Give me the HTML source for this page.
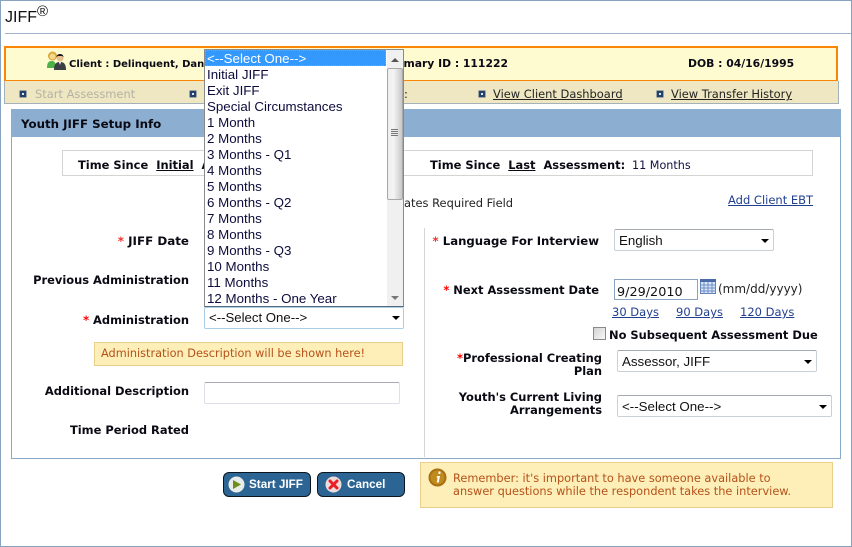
<!DOCTYPE html>
<html><head><meta charset="utf-8">
<style>
html,body{margin:0;padding:0;background:#fff}
#p{position:relative;width:852px;height:547px;overflow:hidden;background:#fff;font-family:"DejaVu Sans",sans-serif;font-size:11.45px;color:#000}
#p div,#p a,#p span.a,#p svg{position:absolute}
.t{white-space:nowrap;line-height:14px}
.b{font-weight:bold;font-size:11.45px;color:#0a0a14}
.r{text-align:right}
.red{color:#f03030}
.lnk{color:#1f3f8f;text-decoration:underline;white-space:nowrap;line-height:14px;font-size:11.5px}
.nav{color:#222;text-decoration:underline;white-space:nowrap;line-height:14px;font-size:11.45px}
.sq{width:6px;height:6px;background:#24406e;border:0;box-shadow:0 0 0 0.5px #4a6080}
.sq:after{content:"";position:absolute;left:2px;top:2px;width:2px;height:2px;background:#dfe6ee}
.sel{background:#fff;border:1px solid #c9d0d8;border-top-color:#a5a9b0;border-radius:2px;box-sizing:border-box;font-family:"Liberation Sans",sans-serif;font-size:13.33px;line-height:18px;color:#111;white-space:nowrap}
.arr{width:0;height:0;border-left:4px solid transparent;border-right:4px solid transparent;border-top:4px solid #000}
.it{left:3px;height:16px;line-height:18px;font-family:"Liberation Sans",sans-serif;font-size:13.33px;color:#0c0c3c;white-space:nowrap}
.btn{background:#2c6593;border:1px solid #0b1620;border-radius:6px;box-sizing:border-box;height:25px;top:472px;color:#fff;font-family:"Liberation Sans",sans-serif;font-weight:bold;font-size:11.7px;line-height:23px;white-space:nowrap}
.note{background:#feeeb8;border:1px solid #e8cf8c;box-sizing:border-box;color:#b5521a}
</style></head><body>
<div id="p">
<div style="left:0;top:0;width:850px;height:545px;border:1px solid #88a3bf"></div>
<div class="t" style="left:5px;top:8px;font-family:'Liberation Sans',sans-serif;font-size:16px;line-height:20px;color:#111">JIFF<span style="position:relative;top:-6px;font-size:15px">®</span></div>
<div style="left:5px;top:33px;width:846px;height:1px;background:#9fb4c8"></div>

<div style="left:4px;top:46px;width:830px;height:32px;background:#fffbd1;border:2px solid #fb8505"></div>
<svg style="left:46px;top:50px" width="22" height="22" viewBox="0 0 22 22">
<circle cx="6.500" cy="6" r="4.500" fill="#d8a83a"/><circle cx="6.500" cy="6.500" r="3" fill="#f4d88a"/>
<path d="M1 18 C1 12 3 11 6 11 C8 11 10 12 10 18Z" fill="#4fb04a"/>
<circle cx="14" cy="8" r="3.500" fill="#e8c090"/><path d="M10.500 7 C10.500 3 17.500 3 17.500 7 L16 6 L12 6Z" fill="#1a1a1a"/>
<path d="M8 20 C8 13 11 12 14 12 C17 12 20 13 20 20Z" fill="#3c4044"/><path d="M13 12 L14 15 L15 12Z" fill="#fff"/>
</svg>
<div class="t b" style="left:69px;top:58px;font-size:10px">Client : Delinquent, Dan</div>
<div class="t b r" style="right:344px;top:57px;font-size:10.8px">Primary ID : 111222</div>
<div class="t b" style="left:688px;top:57px;font-size:10.8px">DOB : 04/16/1995</div>

<div style="left:4px;top:81px;width:833px;height:22px;background:#efe7c1;border:1px solid #a3b2ba;border-top:0"></div>
<div class="sq" style="left:20px;top:91px"></div>
<div class="t" style="left:35px;top:87px;color:#b4b2a4">Start Assessment</div>
<div class="sq" style="left:190px;top:91px"></div>
<div class="t nav" style="left:404px;top:87px;text-decoration:none">:</div>
<div class="sq" style="left:479px;top:91px"></div>
<a class="nav" style="left:493px;top:87px">View Client Dashboard</a>
<div class="sq" style="left:657px;top:91px"></div>
<a class="nav" style="left:671px;top:87px">View Transfer History</a>

<div style="left:11px;top:109px;width:828px;height:349px;border:1px solid #8aa9c6;border-top:0"></div>
<div style="left:11px;top:109px;width:830px;height:28px;background:#8cafd1"></div>
<div class="t b" style="left:21px;top:117px;font-size:11.8px">Youth JIFF Setup Info</div>

<div style="left:62px;top:150px;width:749px;height:24px;border:1px solid #d4d4d4"></div>
<div class="t b" style="left:78px;top:158px">Time Since&nbsp; <u>Initial</u>&nbsp; A</div>
<div class="t b" style="left:430px;top:158px">Time Since&nbsp; <u>Last</u>&nbsp; Assessment:</div>
<div class="t" style="left:632px;top:159px;color:#101040;font-size:11.2px">11 Months</div>

<div class="t" style="left:404px;top:196px;color:#222">ates Required Field</div>
<a class="lnk" style="left:728px;top:193px">Add Client EBT</a>

<div class="t b r" style="right:663px;top:234px;font-size:11.9px"><span class="red">*</span> JIFF Date</div>
<div class="t b r" style="right:663px;top:273px">Previous Administration</div>
<div class="t b r" style="right:663px;top:313px"><span style="color:#f00">*</span> Administration</div>
<div class="t b r" style="right:663px;top:384px">Additional Description</div>
<div class="t b r" style="right:663px;top:423px">Time Period Rated</div>

<div class="note t" style="left:94px;top:342px;width:309px;height:24px;line-height:22px;padding-left:6px;font-size:11.3px">Administration Description will be shown here!</div>
<div style="left:204px;top:382px;width:196px;height:22px;background:#fff;border:1px solid #dde0e8;border-top-color:#a8abb2;border-radius:2px;box-sizing:border-box"></div>

<div class="sel" style="left:204px;top:307px;width:200px;height:22px;padding-left:4px;border-color:#a9cfe6;line-height:20px;font-size:13.2px">&lt;--Select One--&gt;<div class="arr" style="right:3px;top:8px"></div></div>

<div style="left:204px;top:49px;width:198px;height:256px;background:#fff;border:1px solid #8a8a8a;border-bottom-color:#566a7a;overflow:hidden">
<div style="left:0;top:0;width:181px;height:16px;background:#3399ff;outline:1px dotted #f08a28;outline-offset:-1px"></div>
<div class="it" style="top:0;color:#fff;left:2px">&lt;--Select One--&gt;</div>
<div class="it" style="top:16px;left:2px">Initial JIFF</div>
<div class="it" style="top:32px;left:2px">Exit JIFF</div>
<div class="it" style="top:48px;left:2px">Special Circumstances</div>
<div class="it" style="top:64px;left:2px">1 Month</div>
<div class="it" style="top:80px;left:2px">2 Months</div>
<div class="it" style="top:96px;left:2px">3 Months - Q1</div>
<div class="it" style="top:112px;left:2px">4 Months</div>
<div class="it" style="top:128px;left:2px">5 Months</div>
<div class="it" style="top:144px;left:2px">6 Months - Q2</div>
<div class="it" style="top:160px;left:2px">7 Months</div>
<div class="it" style="top:176px;left:2px">8 Months</div>
<div class="it" style="top:192px;left:2px">9 Months - Q3</div>
<div class="it" style="top:208px;left:2px">10 Months</div>
<div class="it" style="top:224px;left:2px">11 Months</div>
<div class="it" style="top:240px;left:2px">12 Months - One Year</div>
<div style="left:182px;top:0;width:16px;height:256px;background:#f0f0f0"></div>
<div class="arr" style="left:186px;top:8px;border-top:0;border-bottom:4px solid #555"></div>
<div class="arr" style="left:186px;top:246px;border-top:4px solid #777"></div>
<div style="left:182px;top:18px;width:14px;height:130px;background:linear-gradient(90deg,#eee,#f4f4f4 40%,#c8c8c8);border:1px solid #a8a8a8;border-radius:2px"></div>
<div style="left:186px;top:79px;width:7px;height:7px;background:repeating-linear-gradient(180deg,#777 0,#777 1px,#eee 1px,#eee 2px)"></div>
</div>

<div style="left:424px;top:228px;width:1px;height:229px;background:#d4d4d4"></div>

<div class="t b r" style="right:253px;top:234px;font-size:11.7px"><span class="red">*</span> Language For Interview</div>
<div class="t b r" style="right:253px;top:283px"><span style="color:#f00">*</span> Next Assessment Date</div>
<div class="sel" style="left:614px;top:229px;width:160px;height:22px;padding-left:4px;line-height:21px">English<div class="arr" style="right:4px;top:9px"></div></div>
<div style="left:614px;top:279px;width:84px;height:21px;border:1px solid #8aa4c0;box-sizing:border-box;background:#fff;font-size:12.8px;line-height:25px;padding-left:2px;color:#111;white-space:nowrap">9/29/2010</div>
<svg style="left:700px;top:279px" width="17" height="16" viewBox="0 0 17 16">
<rect x="0.500" y="0.500" width="15" height="14" fill="#dbe6f6" stroke="#5f7fb8"/>
<rect x="0" y="0" width="16" height="3" fill="#4a6aa8"/>
<path d="M0 6H16M0 9H16M0 12H16M4 3V15M8 3V15M12 3V15" stroke="#6f8fc8" stroke-width="1" fill="none"/>
</svg>
<div class="t" style="left:718px;top:282px;color:#222;font-size:12px">(mm/dd/yyyy)</div>
<a class="lnk" style="left:612px;top:305px">30 Days</a>
<a class="lnk" style="left:676px;top:305px">90 Days</a>
<a class="lnk" style="left:740px;top:305px">120 Days</a>
<div style="left:593px;top:327px;width:11px;height:11px;border:1px solid #8a8a8a;background:linear-gradient(135deg,#d4d4d4,#f8f8f8)"></div>
<div class="t b" style="left:609px;top:328px">No Subsequent Assessment Due</div>
<div class="b r" style="right:250px;top:352px;line-height:13px;white-space:nowrap"><span style="color:#f00">*</span>Professional Creating<br>Plan</div>
<div class="sel" style="left:617px;top:350px;width:200px;height:22px;padding-left:4px;line-height:21px">Assessor, JIFF<div class="arr" style="right:4px;top:9px"></div></div>
<div class="b r" style="right:250px;top:391px;line-height:13px;white-space:nowrap">Youth's Current Living<br>Arrangements</div>
<div class="sel" style="left:617px;top:395px;width:215px;height:22px;padding-left:4px;line-height:21px">&lt;--Select One--&gt;<div class="arr" style="right:4px;top:9px"></div></div>

<div class="btn" style="left:223px;width:88px;padding-left:25px">Start JIFF</div>
<svg style="left:228px;top:476px" width="17" height="17" viewBox="0 0 17 17"><circle cx="8.500" cy="8.500" r="8" fill="#e8ecea"/><path d="M5 4 L13 8.500 L5 13Z" fill="#6c8e1c"/></svg>
<div class="btn" style="left:317px;width:88px;padding-left:29px">Cancel</div>
<svg style="left:325px;top:476px" width="17" height="17" viewBox="0 0 17 17"><circle cx="8.500" cy="8.500" r="8" fill="#ecdcdc"/><path d="M5 5 L12 12 M12 5 L5 12" stroke="#ee1c24" stroke-width="3" stroke-linecap="round"/></svg>

<div class="note" style="left:420px;top:462px;width:413px;height:46px"></div>
<svg style="left:428px;top:468px" width="19" height="19" viewBox="0 0 19 19"><circle cx="9.500" cy="9.500" r="9" fill="#a8700f"/><circle cx="9.500" cy="9.500" r="7" fill="#c08a1c"/><path d="M10.500 3.500h2v2.500h-2zM9 8h3l-1.300 6.500h-2l1-4.800h-1z" fill="#fff"/></svg>
<div class="t" style="left:453px;top:472px;line-height:13px;color:#b5521a;font-size:11.35px">Remember: it's important to have someone available to<br>answer questions while the respondent takes the interview.</div>
</div>
</body></html>
